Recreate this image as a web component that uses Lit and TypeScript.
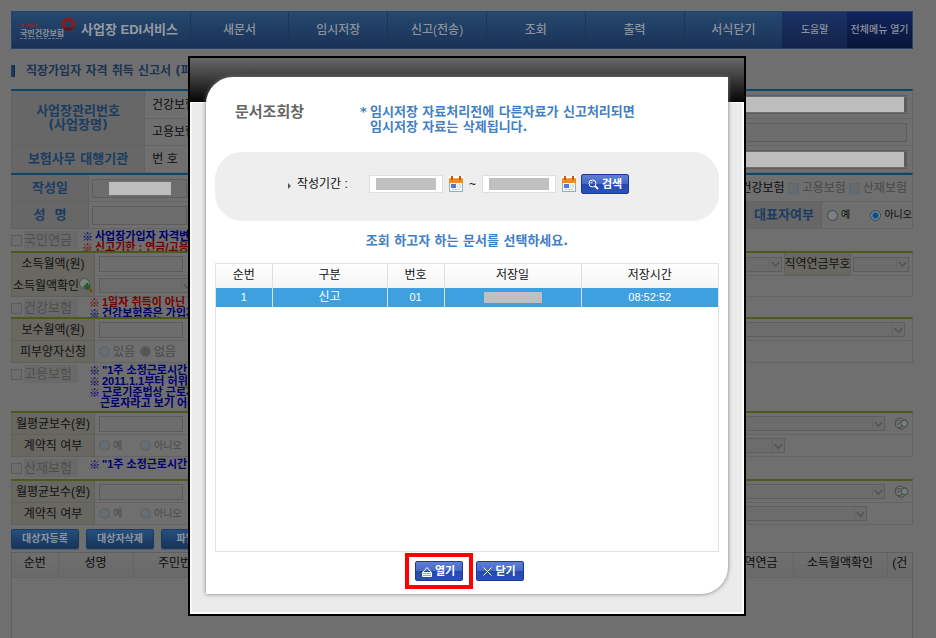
import { LitElement, html, css, svg, nothing } from "lit";
import { customElement } from "lit/decorators.js";

const chevron = html`<svg class="chev" width="12" height="12" viewBox="0 0 12 12" aria-hidden="true">${svg`<path d="M2 4 L6 8.5 L10 4" fill="none" stroke="#555" stroke-width="1.8"/>`}</svg>`;

const select = (label: string, size: string) => html`
  <span class="sel ${size}"><select aria-label=${label} disabled><option></option></select>${chevron}</span>`;

const calendar = html`<svg width="14" height="16" viewBox="0 0 14 16" aria-hidden="true">
  <rect x="0.5" y="3.5" width="13" height="12" fill="#f4fafa" stroke="#8fb0b4"/>
  <rect x="0" y="2" width="14" height="5" fill="#f08a1c"/>
  <rect x="0" y="2" width="14" height="1" fill="#f7a94a"/>
  <rect x="2" y="0" width="2" height="4" fill="#c05a10"/><rect x="10" y="0" width="2" height="4" fill="#c05a10"/>
  <rect x="2" y="8" width="5" height="4" fill="#5573d8"/>
  <path d="M8 9h1M10 9h2M8 11h1M10 11h2M3 13.5h2M6 13.5h2M9 13.5h2" stroke="#b6c4cc"/>
</svg>`;

const binoculars = html`<svg class="bino" width="15" height="15" viewBox="0 0 15 15" aria-hidden="true">
  <path d="M1.500 9.500V4.500L4 2L8 2.500L9 4L12.500 4" fill="#777" stroke="#4b4b4b"/>
  <circle cx="4.800" cy="8" r="3.700" fill="#777" stroke="#4b4b4b"/>
  <circle cx="10.500" cy="7.500" r="3.400" fill="#71807d" stroke="#4b4b4b"/>
  <path d="M4 9.500V7H6.500M4 12.500l4.500 .8 3-2" fill="none" stroke="#4b4b4b"/>
</svg>`;

@customElement("app-root")
export class AppRoot extends LitElement {
  static styles = css`
    :host {
      display: flex;
      flex-direction: column;
      box-sizing: border-box;
      position: relative;
      min-height: 100vh;
      padding: 11px 23px 0 11px;
      overflow: hidden;
      background: #6f6f6f;
      color: #0c0c0c;
      font: 12px/16px "Liberation Sans", "Noto Sans CJK KR", sans-serif;
      white-space: nowrap;
    }
    * { box-sizing: border-box; }
    input, select, button { font: inherit; margin: 0; border-radius: 0; }
    a { color: inherit; text-decoration: none; }

    .top {
      display: grid;
      grid-template-columns: 178fr repeat(6, 99fr) 65fr 65fr;
      height: 38px;
      border: 1px solid #25446e;
      background: linear-gradient(#24496f, #1b3157);
      color: #8d949d;
      font-weight: 500;
    }
    .top a { display: flex; align-items: center; justify-content: center; border-left: 1px solid #1b3559; }
    .top .small { font-size: 10px; border: 0; background: linear-gradient(#1a3165, #13234a); }
    .top .all { background: linear-gradient(#10235e, #081638); }
    .brand { display: flex; align-items: center; padding-left: 8px; gap: 4px; }
    .brand strong { font-size: 13px; font-weight: 700; color: #959ba3; }

    .title {
      display: flex;
      align-items: center;
      gap: 11px;
      height: 40px;
      padding-top: 3px;
      margin: 0;
      font: bold 12px/16px "DejaVu Sans", "Noto Sans CJK KR", sans-serif;
      color: #1b3350;
    }
    .title::before { content: ""; width: 4px; height: 12px; background: linear-gradient(90deg, #1b4470, #14294b); }

    .blue { border-top: 2px solid #0d456b; border-right: 1px solid #646464; }
    .office { display: grid; grid-template-columns: 134px 1fr; grid-template-rows: 28px 27px 27px; }
    .head {
      display: flex;
      flex-direction: column;
      align-items: center;
      justify-content: center;
      background: #676767;
      border: 1px solid #616161;
      border-width: 0 1px 1px 1px;
      color: #1b3c60;
      font: bold 13px/14px "DejaVu Sans", "Noto Sans CJK KR", sans-serif;
    }
    .tall { grid-row: span 2; }
    .cell { display: flex; align-items: center; border-bottom: 1px solid #646464; padding: 0 5px 0 7px; min-width: 0; }
    .office .cell label { width: 50px; }
    .number { white-space: pre; padding-left: 4px; }
    .gap { white-space: pre; }

    .text {
      height: 19px;
      padding: 0 4px;
      border: 1px solid #5c5c5c;
      background: #6d6d6d;
      color: inherit;
      min-width: 0;
    }
    .stack { display: grid; }
    .stack > * { grid-area: 1 / 1; }
    .mask { align-self: center; justify-self: center; height: 13px; background: #bdbdbd; }
    .wide { flex: 1; }
    .wide .mask { width: 100%; height: 15px; border: solid #5c5c5c; border-width: 0 3px 0 1px; }
    .w62 { width: 62px; }
    .date { width: 95px; }

    .person { display: grid; grid-template-columns: 78px 1fr; grid-template-rows: 27px 27px; }
    .person .cell { padding-left: 3px; }
    .end { margin-left: auto; display: flex; align-items: center; gap: 3px; }
    .end label, .opt { display: flex; align-items: center; gap: 3px; }
    .off { color: #484848; }
    .rep { width: 76px; height: 26px; border-width: 0 1px; }
    .person .flush { padding-right: 0; }
    .yesno { display: flex; align-items: center; justify-content: space-between; width: 85px; margin-left: 2px; font-size: 10px; }

    input[type="checkbox"], input[type="radio"] { appearance: none; flex: none; width: 11px; height: 11px; border: 1px solid #5b5b5b; background: #6d6d6d; }
    .end input[type="checkbox"] { border-color: #5d6870; background: #656b6e; }
    input[type="radio"] { border-radius: 50%; border-color: #5a6166; background: #676d70; }
    .now input[type="radio"] { border-color: #3c454d; background: #7a8083; }
    .now input[type="radio"]:checked { background: radial-gradient(circle, #0f4a7c 0 2px, #6b8ca5 4px); }
    .cell input.dim:checked { background: #565656; }

    .kind { display: flex; align-items: flex-start; gap: 4px; height: 22px; padding-top: 2px; }
    .kind label { display: flex; align-items: center; gap: 2px; color: #4f4f49; font-size: 13px; line-height: 18px; width: 67px; background: linear-gradient(90deg, #0000 13px, #696969 13px); }
    .kind.high { height: 48px; }
    .kind.mid { height: 20px; }
    .kind.mid .notes { margin-top: -2px; }
    .notes { margin: 0; padding: 0; list-style: none; font-size: 11px; line-height: 11px; font-weight: bold; color: #00006c; }
    .notes.in { padding-left: 7px; }
    .notes li { height: 11px; }
    .notes li::before { content: "※"; display: inline-block; vertical-align: top; width: 13px; font-family: "Noto Sans CJK KR", sans-serif; font-weight: 900; }
    .notes li.more::before { content: ""; width: 11px; }
    .notes li.red { color: #780000; }

    .form { border-top: 2px solid #4b591b; border-right: 1px solid #626262; }
    .form .line { display: grid; grid-template-columns: 84px 1fr; height: 22px; }
    .form .name { display: flex; align-items: center; justify-content: center; background: #686762; border: 1px solid #5f5f5c; border-width: 0 1px 1px 1px; color: #101010; }
    .form .cell { padding: 0 7px 0 4px; color: #494949; }
    .form .text { width: 84px; height: 16px; }
    .form .end { gap: 2px; }
    .form .cell.tight { padding-right: 3px; }
    .form .code { width: 67px; height: 22px; }
    .opt.first { width: 41px; }
    .tiny { font-size: 10px; }
    .bino { margin-left: 7px; }
    .sel { display: grid; align-items: center; }
    .sel > * { grid-area: 1 / 1; }
    .sel select { appearance: none; width: 100%; height: 15px; border: 1px solid #5d5d5d; background: #6c6c6c; opacity: 1; }
    .chev { justify-self: end; margin-right: 1px; border-left: 1px solid #656565; }
    .s56 { width: 56px; }
    .s95 { width: 95px; }
    .s300 { width: 300px; }
    .m0 { margin-right: 120px; }
    .m1 { margin-right: 38px; }

    .tools { display: flex; gap: 7px; padding: 4px 0 3px; }
    .tools button { width: 68px; height: 20px; padding: 0; border: 1px solid #1d3b5f; border-radius: 2px; background: linear-gradient(#25507f, #17335a); color: #8f979f; font-size: 10px; font-weight: bold; line-height: 16px; box-shadow: 0 1px 1px #4b5a6b; }

    .people { flex: 1; border: 1px solid #5f5f5f; border-bottom: 0; overflow: hidden; }
    .people table { width: 100%; border-collapse: collapse; table-layout: fixed; }
    .people th { height: 24px; padding: 0 0 3px; font-weight: normal; overflow: hidden; background: linear-gradient(#6f6f6f, #696969); border: solid #656565; border-width: 0 0 1px 1px; }
    .people th:first-child { border-left: 0; }
    .c46 { width: 46px; } .c75 { width: 75px; } .c94 { width: 94px; } .c25 { width: 25px; }

    .shade { position: absolute; inset: 0; display: flex; justify-content: center; align-items: flex-start; padding: 56px 2px 0 0; }
    dialog {
      position: static;
      display: block;
      width: 558px;
      margin: 0;
      padding: 19px 16px 20px;
      border: 2px solid #000;
      color: #111;
      background: linear-gradient(#686868, #3c3c3c 20px, #050505 44px, #fff 44px, #fff 45px, #0000 45px),
        linear-gradient(90deg, #fff 1px, #ebebeb 2px calc(100% - 2px), #fff calc(100% - 2px));
      box-shadow: inset 0 -2px #fff;
    }
    .panel { display: flex; flex-direction: column; background: #fff; border-radius: 27px 0 27px 0; box-shadow: 0 0 4px #777; padding: 24px 9px 4px; }
    .intro { display: flex; gap: 48px; padding-left: 20px; height: 51px; }
    .intro h2 { margin: 0; width: 77px; font-size: 15px; line-height: 22px; color: #666; }
    .say { margin: 0; font: bold 13px/15px "DejaVu Sans", "Noto Sans CJK KR", sans-serif; color: #3f80c6; }
    .warn { display: grid; grid-template-columns: 10px auto; padding-top: 3px; }
    .search { display: flex; align-items: center; height: 69px; padding: 0 0 5px 73px; border-radius: 27px; background: #eee; }
    .search label { display: flex; align-items: center; width: 81px; gap: 6px; }
    .search label::before { content: ""; border: solid transparent; border-width: 3px 0 3px 3px; border-left-color: #555; margin-top: 4px; }
    .search .text { width: 74px; height: 18px; border: 1px solid #e0e0e0; background: #fff; }
    .search .mask { width: 60px; height: 12px; background: #c0c0c0; }
    .pick { border: 0; padding: 0; margin-left: 6px; width: 14px; height: 16px; background: #fff; }
    .pick svg, .btn svg { display: block; }
    .tilde { width: 19px; text-align: center; }
    .btn { display: flex; align-items: center; justify-content: center; gap: 3px; width: 48px; height: 20px; padding: 0; border: 1px solid #1c389a; border-radius: 2px; background: linear-gradient(#5f7fd0, #4468c4 50%, #2348b4 50%, #2a50bc); color: #fff; font-size: 11px; font-weight: bold; line-height: 16px; }
    .search .btn { margin-left: 5px; }
    .search, .ask, .list { flex: none; }
    .ask { padding: 12px 0 15px; text-align: center; }
    .list { height: 289px; border: 1px solid #e2e2e2; }
    .list table { width: 100%; border-collapse: collapse; table-layout: fixed; text-align: center; }
    .list th { height: 24px; padding: 0 0 3px; font-weight: normal; background: linear-gradient(#fff, #f4f4f4); }
    .list th, .list td { border-left: 1px solid #dedede; }
    .list th:first-child, .list td:first-child { border-left: 0; }
    .list td { height: 19px; padding: 0 0 1px; background: #3fa0e0; color: #fff; line-height: 16px; font-size: 11px; }
    .list .kr { font-size: 12px; }
    .list .mask { display: block; width: 58px; height: 11px; margin: 0 auto; background: #c0c0c0; }
    .l56 { width: 56px; } .l115 { width: 115px; } .l57 { width: 57px; } .l137 { width: 137px; }
    .foot { display: flex; align-items: center; justify-content: center; gap: 3px; height: 38px; padding-right: 6px; }
    .hot { border: 4px solid #f00; padding: 4px 6px; height: 36px; display: flex; align-items: center; }
  `;

  private field(name: string, label: string, masked: boolean) {
    return html`<div class="cell ${name === "n3" ? "number" : ""}"><label for=${name}>${label}</label>
      <span class="wide stack"><input class="text" id=${name} />${masked ? html`<span class="mask"></span>` : nothing}</span></div>`;
  }

  private work(id: string, second: unknown) {
    return html`<section class="form">
      <div class="line"><label class="name" for=${id}>월평균보수(원)</label>
        <div class="cell tight"><input class="text" id=${id} disabled />
          <span class="end">${select("보수 구분", "s300")}${binoculars}</span></div></div>
      <div class="line"><span class="name">계약직 여부</span>
        <div class="cell tiny">
          <label class="opt first"><input type="radio" name=${id} disabled />예</label>
          <label class="opt"><input type="radio" name=${id} disabled />아니오</label>
          <span class="end">${second}</span></div></div>
    </section>`;
  }

  render() {
    return html`
      <nav class="top">
        <div class="brand">
          <svg width="57" height="26" viewBox="0 0 57 26" aria-hidden="true">
            <circle cx="48.5" cy="7" r="5" fill="none" stroke="#861d1b" stroke-width="3.6"/>
            <path d="M43 10.500L54 10.500L50 14L45 13z" fill="#5d1418"/>
            <text x="0" y="10" font-size="6" font-weight="700" fill="#9a2222">h·well</text>
            <text x="0" y="19" font-size="8" font-weight="700" fill="#8d949d">국민건강보험</text>
            <path d="M0 21.500H42" stroke="#687483" stroke-dasharray="3 1"/>
          </svg>
          <strong>사업장 EDI서비스</strong>
        </div>
        ${["새문서", "임시저장", "신고(전송)", "조회", "출력", "서식닫기"].map((t) => html`<a href="#">${t}</a>`)}
        <a href="#" class="small">도움말</a>
        <a href="#" class="small all">전체메뉴 열기</a>
      </nav>

      <h1 class="title">직장가입자 자격 취득 신고서 (피부양자)</h1>

      <section class="blue office">
        <div class="head tall"><span>사업장관리번호</span><span>(사업장명)</span></div>
        ${this.field("n1", "건강보험", true)}
        ${this.field("n2", "고용보험", false)}
        <div class="head">보험사무 대행기관</div>
        ${this.field("n3", " 번 호", true)}
      </section>

      <section class="blue person">
        <label class="head" for="day">작성일</label>
        <div class="cell">
          <span class="stack"><input class="text date" id="day" /><span class="mask w62"></span></span>
          <span class="end">
            <label><input type="checkbox" />건강보험</label>
            <label class="off"><input type="checkbox" disabled />고용보험</label>
            <label class="off"><input type="checkbox" disabled />산재보험</label>
          </span>
        </div>
        <label class="head gap" for="who">성  명</label>
        <div class="cell flush">
          <input class="text date" id="who" />
          <span class="end now">
            <span class="head rep">대표자여부</span>
            <span class="yesno">
              <label><input type="radio" name="rep" />예</label>
              <label><input type="radio" name="rep" checked />아니오</label>
            </span>
          </span>
        </div>
      </section>

      <div class="kind">
        <label><input type="checkbox" disabled />국민연금</label>
        <ul class="notes"><li>사업장가입자 자격변동</li><li class="red">신고기한 : 연금/고용</li></ul>
      </div>
      <section class="form">
        <div class="line"><label class="name" for="inc">소득월액(원)</label>
          <div class="cell tight"><input class="text" id="inc" disabled />
            <span class="end">${select("취득부호", "s95")}<span class="name code">직역연금부호</span>${select("직역연금부호", "s56")}</span></div></div>
        <div class="line"><span class="name">소득월액확인<svg width="14" height="15" viewBox="0 0 14 15" aria-hidden="true">
            <path d="M9.500 10l3.500 4" stroke="#6b4a1e" stroke-width="2.500"/>
            <circle cx="5.500" cy="5.500" r="5" fill="#7b857c" stroke="#4a5154"/>
            <path d="M8 5v7M4.500 8.500h7" stroke="#24592a" stroke-width="2.500"/></svg></span>
          <div class="cell">${select("소득월액확인", "s95")}</div></div>
      </section>

      <div class="kind mid">
        <label><input type="checkbox" disabled />건강보험</label>
        <ul class="notes in"><li class="red">1일자 취득이 아닌 경우</li><li>건강보험증은 가입자</li></ul>
      </div>
      <section class="form">
        <div class="line"><label class="name" for="pay">보수월액(원)</label>
          <div class="cell"><input class="text" id="pay" disabled /><span class="end">${select("보수 부호", "s300")}</span></div></div>
        <div class="line"><span class="name">피부양자신청</span>
          <div class="cell">
            <label class="opt first"><input type="radio" name="dep" disabled />있음</label>
            <label class="opt"><input type="radio" class="dim" name="dep" checked disabled />없음</label></div></div>
      </section>

      <div class="kind high">
        <label><input type="checkbox" disabled />고용보험</label>
        <ul class="notes in"><li>"1주 소정근로시간</li><li>2011.1.1부터 허위</li><li>근로기준법상 근로자</li><li class="more">근로자라고 보기 어려운</li></ul>
      </div>
      ${this.work("w1", html`<span class="m0">${select("계약직 구분", "s95")}</span>`)}

      <div class="kind">
        <label><input type="checkbox" disabled />산재보험</label>
        <ul class="notes in"><li>"1주 소정근로시간</li></ul>
      </div>
      ${this.work("w2", html`<span class="m1">${select("근로 구분", "s300")}</span>`)}

      <div class="tools"><button>대상자등록</button><button>대상자삭제</button><button>파일첨부</button></div>

      <div class="people"><table>
        <colgroup><col class="c46" /><col class="c75" /><col class="c94" /><col /><col class="c75" /><col class="c94" /><col class="c25" /></colgroup>
        <thead><tr><th>순번</th><th>성명</th><th>주민번호</th><th></th><th>직역연금</th><th>소득월액확인</th><th>(건</th></tr></thead>
      </table></div>

      <div class="shade">
        <dialog open aria-labelledby="dt">
          <div class="panel">
            <div class="intro">
              <h2 id="dt">문서조회창</h2>
              <p class="say warn"><span>*</span><span>임시저장 자료처리전에 다른자료가 신고처리되면<br />임시저장 자료는 삭제됩니다.</span></p>
            </div>
            <form class="search" @submit=${(e: Event) => e.preventDefault()}>
              <label for="from">작성기간 :</label>
              <span class="stack"><input class="text" id="from" /><span class="mask"></span></span>
              <button type="button" class="pick" aria-label="시작일 선택">${calendar}</button>
              <span class="tilde">~</span>
              <span class="stack"><input class="text" aria-label="종료일" /><span class="mask"></span></span>
              <button type="button" class="pick" aria-label="종료일 선택">${calendar}</button>
              <button class="btn"><svg width="11" height="11" viewBox="0 0 11 11" aria-hidden="true">
                <circle cx="4.500" cy="4.500" r="3.500" fill="none" stroke="#fff"/><path d="M3 4.500a1.500 1.500 0 0 1 1.500-1.500" fill="none" stroke="#fff" stroke-width=".8"/><path d="M7 7l3 3" stroke="#fff" stroke-width="1.800"/></svg>검색</button>
            </form>
            <p class="say ask">조회 하고자 하는 문서를 선택하세요.</p>
            <div class="list"><table>
              <colgroup><col class="l56" /><col class="l115" /><col class="l57" /><col class="l137" /><col /></colgroup>
              <thead><tr><th>순번</th><th>구분</th><th>번호</th><th>저장일</th><th>저장시간</th></tr></thead>
              <tbody><tr><td>1</td><td class="kr">신고</td><td>01</td><td><span class="mask"></span></td><td>08:52:52</td></tr></tbody>
            </table></div>
            <div class="foot">
              <span class="hot"><button class="btn"><svg width="10" height="11" viewBox="0 0 10 11" aria-hidden="true">
                <path d="M1 6L5 1.500L9 6M.500 6.500H9.500V10.500H.500z" fill="none" stroke="#fff"/><path d="M1 8.500H9" stroke="#fff" stroke-width="2"/></svg>열기</button></span>
              <button class="btn"><svg width="9" height="9" viewBox="0 0 9 9" aria-hidden="true">
                <path d="M.500 .500L8.500 8.500M8.500 .500L.500 8.500" stroke="#fff"/></svg>닫기</button>
            </div>
          </div>
        </dialog>
      </div>
    `;
  }
}
